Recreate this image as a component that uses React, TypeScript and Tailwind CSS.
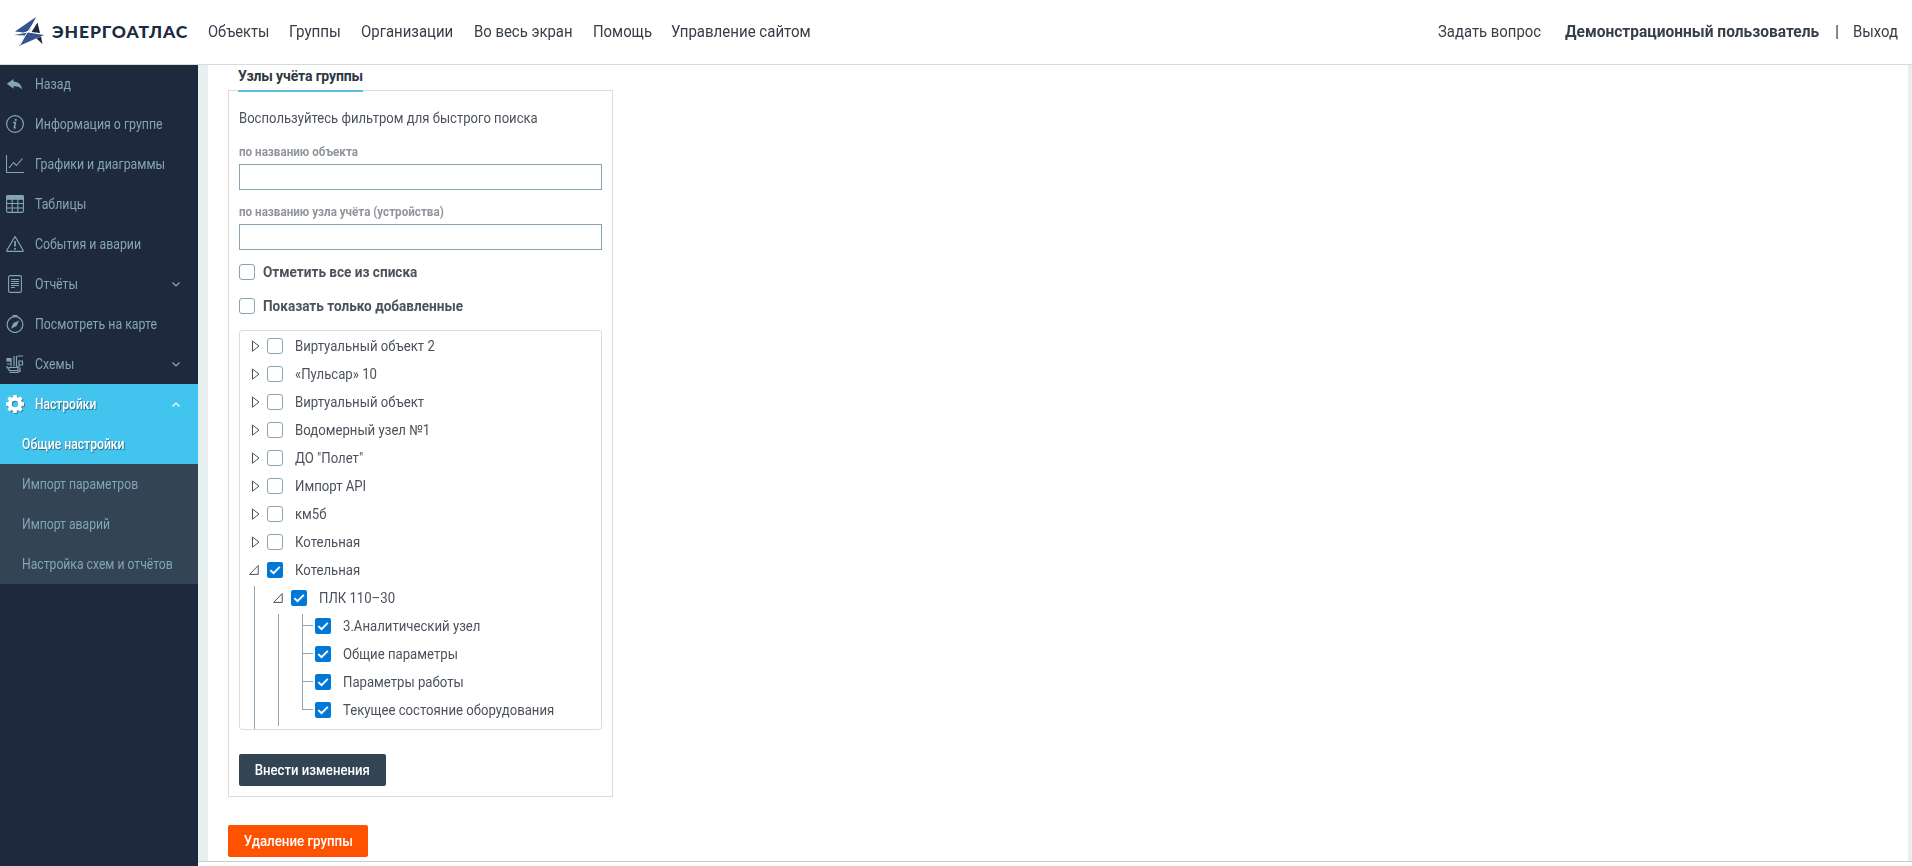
import type { ReactNode } from 'react';

type NavItem = {
  label: string;
  className: string;
};

type MenuItem = {
  label: string;
  icon: ReactNode;
  expandable?: boolean;
};

const navItems: NavItem[] = [
  { label: 'Объекты', className: 'w-[81px] scale-x-[0.915]' },
  { label: 'Группы', className: 'w-[72px] scale-x-[0.95]' },
  { label: 'Организации', className: 'w-[113px] scale-x-[0.935]' },
  { label: 'Во весь экран', className: 'w-[119px] scale-x-[0.93]' },
  { label: 'Помощь', className: 'w-[78px] scale-x-[0.93]' },
  { label: 'Управление сайтом', className: 'scale-x-[0.94]' },
];

function BackIcon() {
  return (
    <svg width="18" height="18" viewBox="0 0 18 18" fill="currentColor" className="shrink-0">
      <path d="M.8 8.800 7.500 4v2.500c4.500.2 8.300 3 8.500 8-2-2.700-4.500-3.400-8.500-3.300v2.600z" />
    </svg>
  );
}

function InfoIcon() {
  return (
    <svg width="18" height="18" viewBox="0 0 18 18" fill="none" stroke="currentColor" className="shrink-0">
      <circle cx="9" cy="9" r="8.400" strokeWidth="1.200" />
      <path d="M7.200 7.500h2.200L8.300 12.700h1.500" strokeWidth="1.500" />
      <circle cx="9.800" cy="4.900" r="1.100" fill="currentColor" stroke="none" />
    </svg>
  );
}

function ChartIcon() {
  return (
    <svg width="18" height="18" viewBox="0 0 18 18" fill="none" stroke="currentColor" strokeWidth="1.100" className="shrink-0">
      <path d="M.5 0v17.500H18" />
      <path d="m3 13 4.500-5.500 3 3L16.500 3.500" />
    </svg>
  );
}

function TableIcon() {
  return (
    <svg width="18" height="18" viewBox="0 0 18 18" fill="none" stroke="currentColor" strokeWidth="1.100" className="shrink-0">
      <rect x=".6" y=".6" width="16.800" height="16.800" rx="1.500" />
      <path d="M1 .8h16v3.400H1z" fill="currentColor" />
      <path d="M.5 8.500h17M.5 13h17M6.200 4v13.500M11.800 4v13.500" />
    </svg>
  );
}

function WarningIcon() {
  return (
    <svg width="18" height="18" viewBox="0 0 18 18" fill="none" stroke="currentColor" strokeWidth="1.200" className="shrink-0">
      <path d="M9 1.500.9 15.200q-.4 1.200.8 1.200h14.600q1.200 0 .8-1.200z" strokeLinejoin="round" />
      <path d="M9 6v5.500M9 13v1.700" strokeWidth="1.700" />
    </svg>
  );
}

function ReportIcon() {
  return (
    <svg width="18" height="18" viewBox="0 0 18 18" fill="none" stroke="currentColor" strokeWidth="1.100" className="shrink-0">
      <rect x="2.600" y=".6" width="12.800" height="16.800" rx="1.500" />
      <path d="M5 4.500h8M5 6.500h8M5 8.500h8M5 10.500h8M5 12.500h4" />
    </svg>
  );
}

function CompassIcon() {
  return (
    <svg width="18" height="18" viewBox="0 0 18 18" fill="none" stroke="currentColor" strokeWidth="1.200" className="shrink-0">
      <circle cx="9" cy="9.600" r="7.900" />
      <path d="M6.500.7h5" strokeWidth="1.400" />
      <path d="m13.200 5.400-2.700 5.700-5.700 2.700 2.700-5.700z" fill="currentColor" stroke="none" />
    </svg>
  );
}

function SchemeIcon() {
  return (
    <svg width="18" height="18" viewBox="0 0 18 18" fill="none" stroke="currentColor" strokeWidth="1.200" className="shrink-0">
      <path d="M1 3.500h4v2.500H1z" fill="currentColor" />
      <path d="M5 6v5.500M8 1v10.500M10.500 1v10.500M11.500 1h5.500M17 6h-4v4h3.500v-4M13 10v2h-2.500M1 9h3" />
      <path d="M3 12.500h9v3H3zM1 11v2h2M3.500 17.300h9M14 12.500v4h-2" />
    </svg>
  );
}

function GearIcon() {
  return (
    <svg
      width="18"
      height="18"
      viewBox="0 0 18 18"
      className="shrink-0 drop-shadow-[1px_1px_0_rgba(60,80,90,0.6)]"
      fill="none"
      stroke="currentColor"
    >
      <circle cx="9" cy="9" r="5.200" strokeWidth="4" />
      <path
        d="M9 0v3M9 15v3M0 9h3M15 9h3M2.600 2.600l2.200 2.200M13.200 13.200l2.200 2.200M15.400 2.600l-2.200 2.200M4.800 13.200l-2.200 2.200"
        strokeWidth="3.600"
      />
    </svg>
  );
}

const menuItems: MenuItem[] = [
  { label: 'Назад', icon: <BackIcon /> },
  { label: 'Информация о группе', icon: <InfoIcon /> },
  { label: 'Графики и диаграммы', icon: <ChartIcon /> },
  { label: 'Таблицы', icon: <TableIcon /> },
  { label: 'События и аварии', icon: <WarningIcon /> },
  { label: 'Отчёты', icon: <ReportIcon />, expandable: true },
  { label: 'Посмотреть на карте', icon: <CompassIcon /> },
  { label: 'Схемы', icon: <SchemeIcon />, expandable: true },
];

const subItems = ['Импорт параметров', 'Импорт аварий', 'Настройка схем и отчётов'];

const objects = [
  'Виртуальный объект 2',
  '«Пульсар» 10',
  'Виртуальный объект',
  'Водомерный узел №1',
  'ДО "Полет"',
  'Импорт API',
  'км5б',
  'Котельная',
];

const nodes = ['3.Аналитический узел', 'Общие параметры', 'Параметры работы', 'Текущее состояние оборудования'];

function Chevron({ up }: { up?: boolean }) {
  return (
    <svg width="8" height="5" viewBox="0 0 8 5" fill="none" stroke="currentColor" strokeWidth="1.200">
      <path d={up ? 'M.5 4.500 4 1l3.500 3.500' : 'M.5.500 4 4 7.500.500'} />
    </svg>
  );
}

function Checkbox({ checked }: { checked?: boolean }) {
  if (checked) {
    return (
      <span className="flex size-4 shrink-0 items-center justify-center rounded-[2px] bg-[#0078d7]">
        <svg width="16" height="16" viewBox="0 0 16 16" fill="none" stroke="white" strokeWidth="2">
          <path d="m3.300 8.100 3.200 3.100 6.300-6.300" />
        </svg>
      </span>
    );
  }
  return <span className="size-4 shrink-0 rounded-[3px] border border-[#8aa3b0] bg-white" />;
}

function Arrow({ open }: { open?: boolean }) {
  return (
    <svg
      width="10"
      height="12"
      viewBox="0 0 10 12"
      fill="none"
      stroke="#4b5058"
      strokeLinejoin="round"
      className="mr-[7px] overflow-visible"
    >
      {open ? <path d="M8.200 1.500v8.900H-.400z" /> : <path d="M2.500 1v10.200L9 6.100z" />}
    </svg>
  );
}

function TreeLabel({ children }: { children: ReactNode }) {
  return <span className="ml-3 origin-left scale-x-[0.94]">{children}</span>;
}

function Logo() {
  return (
    <svg width="31" height="30" viewBox="0 0 31 30" className="shrink-0">
      <path d="M22 0 1 14.500 9.500 15.500 15.500 13.500z" fill="#34548f" />
      <path d="M0 18 14 15.500 30 18 5 29 11 18.500z" fill="#34548f" />
      <path d="M23.500 5.500 17.500 15l8.500 1zM22.500 21.500l6 5.500-1.500-7.500z" fill="#1b2740" />
      <path d="M22.500 1.500 11 19 6 28" stroke="white" strokeWidth="1" fill="none" />
    </svg>
  );
}

function Header() {
  return (
    <header className="flex h-[65px] shrink-0 items-center border-b border-[#d8dadc] bg-white text-[16px] text-[#363e48]">
      <div className="flex w-[208px] items-center pl-[14px]">
        <Logo />
        <span className="ml-[7px] font-['Lato'] text-[17.5px] font-black tracking-[0.9px] text-[#1c2a42]">ЭНЕРГОАТЛАС</span>
      </div>
      <nav className="flex whitespace-nowrap">
        {navItems.map((item) => (
          <a key={item.label} className={`origin-left ${item.className}`}>
            {item.label}
          </a>
        ))}
      </nav>
      <div className="ml-auto flex whitespace-nowrap">
        <a className="w-[127px] origin-left scale-x-[0.93]">Задать вопрос</a>
        <a className="w-[270px] origin-left scale-x-[0.97] font-bold">Демонстрационный пользователь</a>
        <span className="w-[18px]">|</span>
        <a className="w-[59px] origin-left scale-x-[0.93]">Выход</a>
      </div>
    </header>
  );
}

function Sidebar() {
  return (
    <aside className="w-[198px] shrink-0 bg-[#1e293d] text-[14px] whitespace-nowrap text-[#83a5b8]">
      <div className="-mt-px">
        {menuItems.map((item) => (
          <div key={item.label} className="flex h-10 items-center pr-[18px] pl-[6px]">
            {item.icon}
            <span className="ml-[11px] origin-left scale-x-[0.88]">{item.label}</span>
            {item.expandable && (
              <span className="ml-auto">
                <Chevron />
              </span>
            )}
          </div>
        ))}
      </div>
      <div className="bg-[#41c4ee] font-medium text-white text-shadow-[1px_1px_1px_rgba(40,70,90,0.7)]">
        <div className="flex h-10 items-center pr-[18px] pl-[6px]">
          <GearIcon />
          <span className="ml-[11px] origin-left scale-x-[0.86]">Настройки</span>
          <span className="ml-auto">
            <Chevron up />
          </span>
        </div>
        <div className="flex h-10 items-center pl-[22px]">
          <span className="origin-left scale-x-[0.87]">Общие настройки</span>
        </div>
      </div>
      <div className="bg-[#334454]">
        {subItems.map((label) => (
          <div key={label} className="flex h-10 items-center pl-[22px]">
            <span className="origin-left scale-x-[0.87]">{label}</span>
          </div>
        ))}
      </div>
    </aside>
  );
}

function Tree() {
  return (
    <div className="mt-4 h-[400px] overflow-hidden rounded-[3px] border border-[#dcdcdc] pt-px pl-[10px]">
      {objects.map((label, i) => (
        <div key={i} className="flex h-7 items-center">
          <Arrow />
          <Checkbox />
          <TreeLabel>{label}</TreeLabel>
        </div>
      ))}
      <div className="flex h-7 items-center">
        <Arrow open />
        <Checkbox checked />
        <TreeLabel>Котельная</TreeLabel>
      </div>
      <div className="mt-0.5 ml-1 flex h-[148px] flex-col border-l border-[#8fa5b1] pl-[19px]">
        <div className="-mt-0.5 mb-0.5 flex h-7 items-center">
          <Arrow open />
          <Checkbox checked />
          <TreeLabel>ПЛК 110–30</TreeLabel>
        </div>
        <div className="ml-1 h-28 border-l border-[#8fa5b1] pl-[23px]">
          {nodes.map((label, i) => (
            <div key={label} className="flex h-7">
              <div className="flex w-[13px] flex-col">
                <div className="h-3 w-[11px] border-b border-l border-[#8fa5b1]" />
                {i < nodes.length - 1 && <div className="h-4 border-l border-[#8fa5b1]" />}
              </div>
              <div className="-mt-0.5 flex h-7 items-center">
                <Checkbox checked />
                <TreeLabel>{label}</TreeLabel>
              </div>
            </div>
          ))}
        </div>
      </div>
    </div>
  );
}

function GroupNodes() {
  return (
    <section className="w-[385px]">
      <div className="flex h-[25px] pl-[10px]">
        <h2 className="z-10 h-[27px] w-[125px] border-b-2 border-[#5bbfdc] text-[14px] leading-[23px] font-bold tracking-[-0.13px] text-[#2f3640]">
          Узлы учёта группы
        </h2>
      </div>
      <div className="h-[707px] border border-[#dcdcdc] px-[10px] pt-[17px]">
        <p className="origin-left scale-x-[0.935] leading-5">Воспользуйтесь фильтром для быстрого поиска</p>
        <label className="mt-4 block h-5 origin-left scale-x-[0.97] text-[12px] leading-4 font-bold text-[#8f959b]">
          по названию объекта
        </label>
        <input className="block h-[26px] w-full border border-[#8aa3b0]" />
        <label className="mt-[14px] block h-5 origin-left scale-x-[0.97] text-[12px] leading-4 font-bold text-[#8f959b]">
          по названию узла учёта (устройства)
        </label>
        <input className="block h-[26px] w-full border border-[#8aa3b0]" />
        <div className="mt-[14px] flex h-4 items-center gap-2 font-bold">
          <Checkbox />
          <span className="origin-left scale-x-[0.97]">Отметить все из списка</span>
        </div>
        <div className="mt-[18px] flex h-4 items-center gap-2 font-bold">
          <Checkbox />
          <span className="origin-left scale-x-[0.97]">Показать только добавленные</span>
        </div>
        <Tree />
        <button className="mt-6 h-8 w-[147px] rounded-[2px] bg-[#334454] font-medium text-white">
          <span className="inline-block scale-x-[0.94]">Внести изменения</span>
        </button>
      </div>
    </section>
  );
}

export default function App() {
  return (
    <div className="flex h-[866px] w-[1912px] flex-col overflow-hidden bg-[#e8efef] font-['Roboto','Liberation_Sans',sans-serif]">
      <Header />
      <div className="flex min-h-0 flex-1">
        <Sidebar />
        <div className="flex flex-1 flex-col">
          <main className="mr-1 ml-[10px] h-[796px] bg-white pl-5 text-[14px] whitespace-nowrap text-[#4b525b]">
            <GroupNodes />
            <button className="mt-7 h-8 w-[140px] rounded-[2px] bg-[#ff5200] font-medium text-white">
              <span className="inline-block scale-x-[0.95]">Удаление группы</span>
            </button>
          </main>
          <div className="h-px bg-[#c5ccd6]" />
          <div className="flex-1 bg-white" />
        </div>
      </div>
    </div>
  );
}
